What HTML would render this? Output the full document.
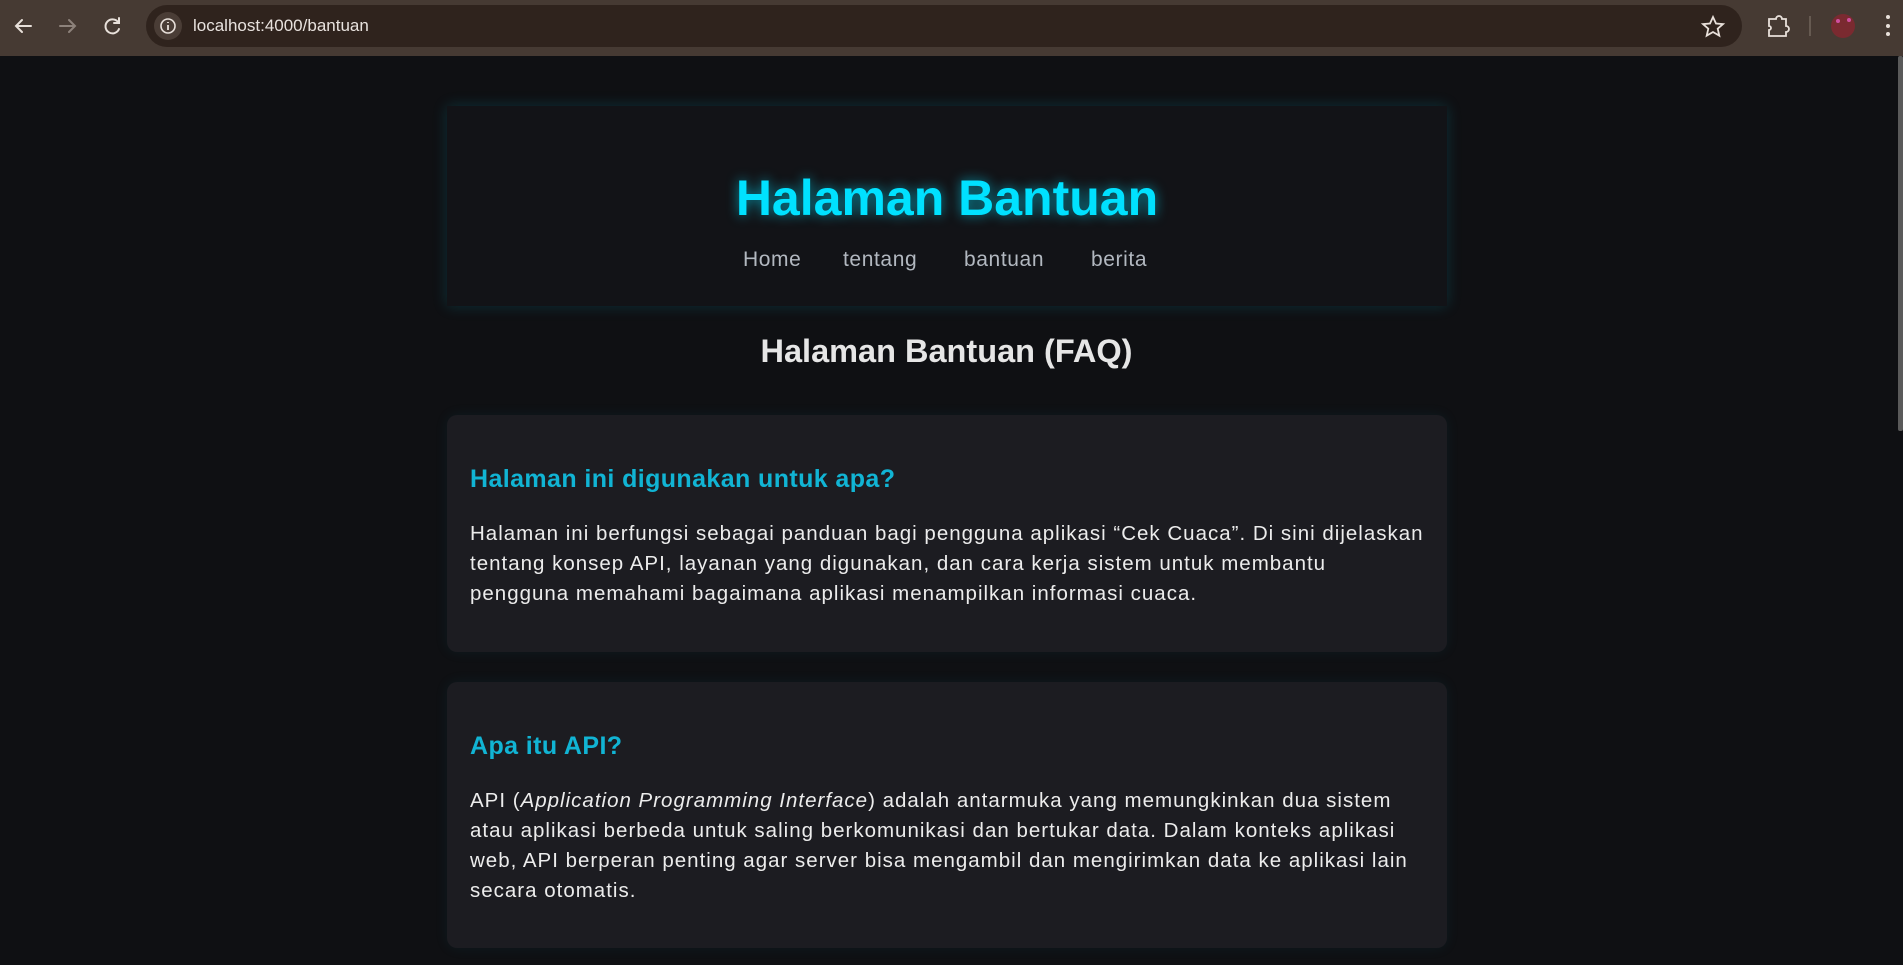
<!DOCTYPE html>
<html><head><meta charset="utf-8"><style>
*{margin:0;padding:0;box-sizing:border-box}
html,body{width:1903px;height:965px;overflow:hidden;background:#0f1013;font-family:"Liberation Sans",sans-serif}
.bar{position:absolute;left:0;top:0;width:1903px;height:56px;background:#463a33}
.url{position:absolute;left:146px;top:5px;width:1596px;height:42px;border-radius:21px;background:#2f231d}
.url .i{position:absolute;left:8px;top:7px;width:28px;height:28px;border-radius:14px;background:#4a3d36}
.url span{position:absolute;left:47px;top:11px;color:#e8e2de;font-size:17px}
.hdr{position:absolute;left:447px;top:106px;width:1000px;height:200px;background:#121317;box-shadow:0 0 14px rgba(0,200,230,.18)}
.hdr h1{position:absolute;left:0;right:0;text-align:center;font-size:50px;color:#00e1ff;font-weight:bold;text-shadow:0 0 12px rgba(0,225,255,.6);top:63px}
.nav{position:absolute;top:142px;font-size:21px;letter-spacing:.6px;color:#b2b8c0}
.faq{position:absolute;left:0;width:1893px;top:333px;text-align:center;font-size:32.5px;font-weight:bold;color:#e6e6e6}
.card{position:absolute;left:447px;width:1000px;background:#1c1c21;border-radius:10px;box-shadow:0 0 14px rgba(0,160,190,.08)}
.card h3{position:absolute;left:23px;font-size:25px;letter-spacing:.4px;font-weight:bold;color:#11b4d4;white-space:nowrap}
.card p{position:absolute;left:23px;font-size:20.5px;letter-spacing:1px;line-height:30px;color:#ececec;white-space:nowrap}
</style></head><body>
<div class="bar">
<svg width="140" height="56" style="position:absolute;left:0;top:0" fill="none" stroke-width="2" stroke-linecap="round">
<path d="M31 26H16M22 20l-6 6 6 6" stroke="#e8e0da"/>
<path d="M60 26h15M69 20l6 6-6 6" stroke="#8d827b"/>
<path d="M118 22a7 7 0 1 0 1 7M119 18v5h-5" stroke="#e8e0da"/>
</svg>
<div class="url"><div class="i"><svg width="28" height="28"><circle cx="14" cy="14" r="7" fill="none" stroke="#e8e0da" stroke-width="1.6"/><path d="M14 13v5M14 10v1" stroke="#e8e0da" stroke-width="1.8"/></svg></div><span>localhost:4000/bantuan</span></div>
<svg width="253" height="56" style="position:absolute;left:1650px;top:0" fill="none" stroke="#e8e0da" stroke-width="1.8">
<path d="M63 17l3 6.5 7 .6-5.3 4.6 1.6 7L63 32l-6.3 3.7 1.6-7L53 24.1l7-.6z"/>
<path d="M119 19h7a3 3 0 0 1 6 0h4v7a3 3 0 0 1 0 6v4h-17v-6a2 2 0 0 0 0-4z"/>
<path d="M160 16v20" stroke="#6a5d55"/>
<circle cx="193" cy="26" r="12" fill="#7a2a30" stroke="none"/>
<circle cx="188" cy="21" r="2" fill="#d04fa0" stroke="none"/><circle cx="199" cy="20" r="2" fill="#d04fa0" stroke="none"/>
<circle cx="238" cy="17" r="2" fill="#e8e0da" stroke="none"/><circle cx="238" cy="26" r="2" fill="#e8e0da" stroke="none"/><circle cx="238" cy="34" r="2" fill="#e8e0da" stroke="none"/>
</svg>
</div>
<div style="position:absolute;right:0;top:56px;width:5px;height:375px;background:#5a5a5a;border-radius:2px"></div>
<div class="hdr"><h1>Halaman Bantuan</h1>
<span class="nav" style="left:296px">Home</span>
<span class="nav" style="left:396px">tentang</span>
<span class="nav" style="left:517px">bantuan</span>
<span class="nav" style="left:644px">berita</span>
</div>
<div class="faq">Halaman Bantuan (FAQ)</div>
<div class="card" style="top:415px;height:237px">
<h3 style="top:50px">Halaman ini digunakan untuk apa?</h3>
<p style="top:104px">Halaman ini berfungsi sebagai panduan bagi pengguna aplikasi “Cek Cuaca”. Di sini dijelaskan<br>tentang konsep API, layanan yang digunakan, dan cara kerja sistem untuk membantu<br>pengguna memahami bagaimana aplikasi menampilkan informasi cuaca.</p>
</div>
<div class="card" style="top:682px;height:266px">
<h3 style="top:50px">Apa itu API?</h3>
<p style="top:104px">API (<i>Application Programming Interface</i>) adalah antarmuka yang memungkinkan dua sistem<br>atau aplikasi berbeda untuk saling berkomunikasi dan bertukar data. Dalam konteks aplikasi<br>web, API berperan penting agar server bisa mengambil dan mengirimkan data ke aplikasi lain<br>secara otomatis.</p>
</div>
</body></html>
